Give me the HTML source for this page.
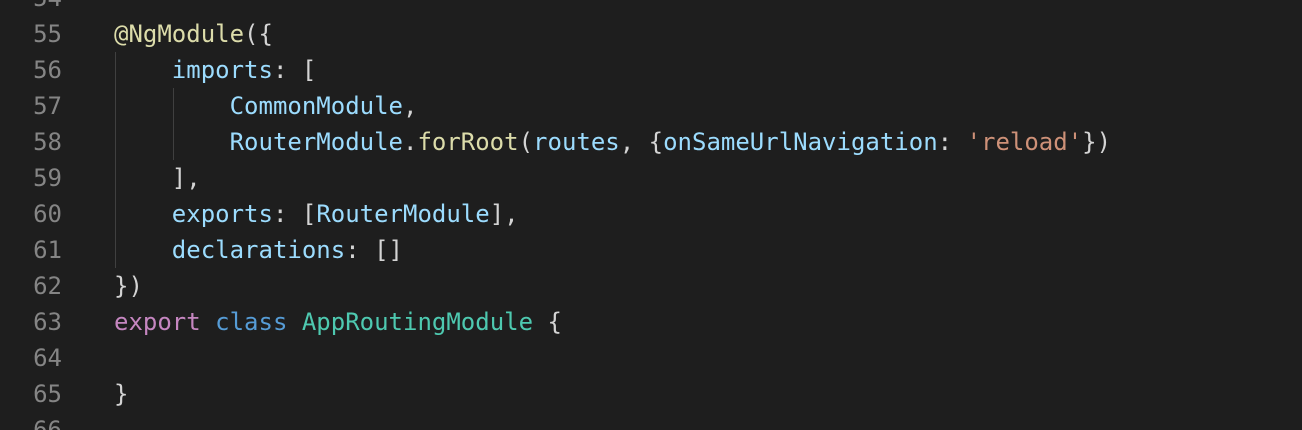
<!DOCTYPE html>
<html><head><style>
html,body{margin:0;background:#1e1e1e;width:1302px;height:430px;overflow:hidden;}
body{position:relative;font-family:"DejaVu Sans Mono","Liberation Mono",monospace;font-size:24px;}
.l{position:absolute;left:0;height:36px;line-height:36px;white-space:pre;}
.n{position:absolute;left:0;width:62px;text-align:right;color:#858585;}
.c{position:absolute;left:114px;color:#d4d4d4;}
.f{color:#dcdcaa}.v{color:#9cdcfe}.t{color:#4ec9b0}.k{color:#c586c0}.b{color:#569cd6}.s{color:#ce9178}
.g{position:absolute;width:1px;background:#404040;}
</style></head><body>
<div class="g" style="left:115px;top:52px;height:216px"></div>
<div class="g" style="left:173px;top:88px;height:72px"></div>
<div class="l" style="top:-20px"><span class="n">54</span></div>
<div class="l" style="top:16px"><span class="n">55</span><span class="c"><span class="f">@NgModule</span>({</span></div>
<div class="l" style="top:52px"><span class="n">56</span><span class="c">    <span class="v">imports</span>: [</span></div>
<div class="l" style="top:88px"><span class="n">57</span><span class="c">        <span class="v">CommonModule</span>,</span></div>
<div class="l" style="top:124px"><span class="n">58</span><span class="c">        <span class="v">RouterModule</span>.<span class="f">forRoot</span>(<span class="v">routes</span>, {<span class="v">onSameUrlNavigation</span>: <span class="s">'reload'</span>})</span></div>
<div class="l" style="top:160px"><span class="n">59</span><span class="c">    ],</span></div>
<div class="l" style="top:196px"><span class="n">60</span><span class="c">    <span class="v">exports</span>: [<span class="v">RouterModule</span>],</span></div>
<div class="l" style="top:232px"><span class="n">61</span><span class="c">    <span class="v">declarations</span>: []</span></div>
<div class="l" style="top:268px"><span class="n">62</span><span class="c">})</span></div>
<div class="l" style="top:304px"><span class="n">63</span><span class="c"><span class="k">export</span> <span class="b">class</span> <span class="t">AppRoutingModule</span> {</span></div>
<div class="l" style="top:340px"><span class="n">64</span></div>
<div class="l" style="top:376px"><span class="n">65</span><span class="c">}</span></div>
<div class="l" style="top:412px"><span class="n">66</span></div>
</body></html>
